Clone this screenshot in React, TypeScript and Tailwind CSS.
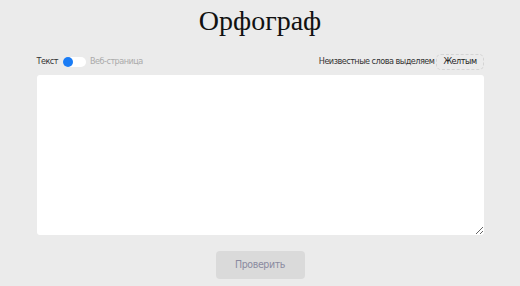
import React from "react";

export default function App() {
  return (
    <div className="min-h-[286px] w-full bg-[#ebebeb] font-['DejaVu_Sans_Condensed','DejaVu_Sans',sans-serif] font-stretch-condensed">
      <div className="mx-auto flex w-[447px] flex-col">
        <h1 className="mt-[1px] h-[40px] text-center font-['Liberation_Serif',serif] text-[28px] leading-[40px] text-[#111] font-stretch-normal">
          Орфограф
        </h1>
        <div className="mt-[11px] flex h-[20px] items-center justify-between text-[9px] tracking-[-0.5px]">
          <div className="flex items-center">
            <span className="text-[#333]">Текст</span>
            <span className="ml-[5px] flex h-[10px] w-[23px] items-center rounded-full bg-white">
              <span className="h-[10px] w-[10px] rounded-full bg-[#1a7cf5]" />
            </span>
            <span className="ml-[4px] text-[#aaa]">Веб-страница</span>
          </div>
          <div className="flex items-center">
            <span className="text-[#333]">Неизвестные слова выделяем</span>
            <span className="ml-[2px] flex h-[16px] items-center rounded-[5px] border border-dashed border-[#d4d4d4] px-[6px] text-[#222]">
              Желтым
            </span>
          </div>
        </div>
        <textarea className="mt-[3px] h-[160px] w-full resize-y rounded-[3px] bg-white outline-none" />
        <div className="mt-[16px] flex justify-center">
          <button className="h-[28px] w-[89px] rounded-[4px] bg-[#dadada] text-[10.5px] tracking-[-0.4px] text-[#8a8aa0]">
            Проверить
          </button>
        </div>
      </div>
    </div>
  );
}
